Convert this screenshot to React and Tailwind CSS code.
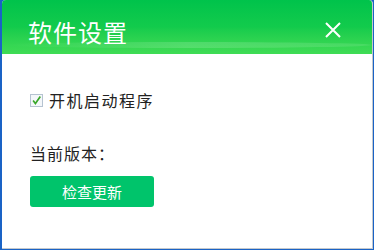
import React, { useState } from 'react';

export default function App() {
  const [autoStart, setAutoStart] = useState(true);

  return (
    <div
      className="w-[374px] h-[250px] bg-[#1a63c6] pl-[2px] pr-[1px] pb-[1px] overflow-hidden"
      style={{ fontFamily: '"Noto Sans CJK SC", "Microsoft YaHei", sans-serif' }}
    >
      <div className="h-full flex flex-col bg-white rounded-t-[4px] overflow-hidden border-r border-b border-[#c4c8cc]">
        {/* Header */}
        <div className="relative h-[54px] shrink-0 bg-gradient-to-b from-[#00c34b] via-[#12cb4c] to-[#3fdc55] flex items-center justify-between pl-[26px] pr-[30px] overflow-hidden">
          <div className="absolute left-0 right-0 bottom-[6px] h-[6px] bg-gradient-to-r from-transparent via-white/15 to-white/10 rounded-[50%]"></div>
          <span className="relative text-white text-[24px] leading-none tracking-[1px] pt-[10px]">软件设置</span>
          <button className="relative text-white translate-y-[3px]">
            <svg width="18" height="18" viewBox="0 0 18 18" fill="none" stroke="white" strokeWidth="2">
              <path d="M2 2 L16 16 M16 2 L2 16" />
            </svg>
          </button>
        </div>

        {/* Body */}
        <div className="flex flex-col pl-[28px] pt-[38px]">
          <label className="flex items-center gap-[6px] cursor-pointer" onClick={() => setAutoStart(!autoStart)}>
            <span className="w-[13px] h-[13px] border border-[#b5c3d1] bg-[#f4f7fa] flex items-center justify-center">
              {autoStart && (
                <svg width="13" height="13" viewBox="0 0 13 13">
                  <path d="M2.5 6.5 L5.2 10 L11 1.8" fill="none" stroke="#3aa72a" strokeWidth="2" />
                </svg>
              )}
            </span>
            <span className="text-[16px] tracking-[1.5px] text-[#222] leading-none">开机启动程序</span>
          </label>

          <div className="mt-[37px] text-[16px] tracking-[1px] text-[#222] leading-none">当前版本：</div>

          <button className="mt-[15px] w-[124px] h-[31px] bg-[#00c46b] rounded-[3px] text-white text-[15px] leading-none">
            检查更新
          </button>
        </div>
      </div>
    </div>
  );
}
